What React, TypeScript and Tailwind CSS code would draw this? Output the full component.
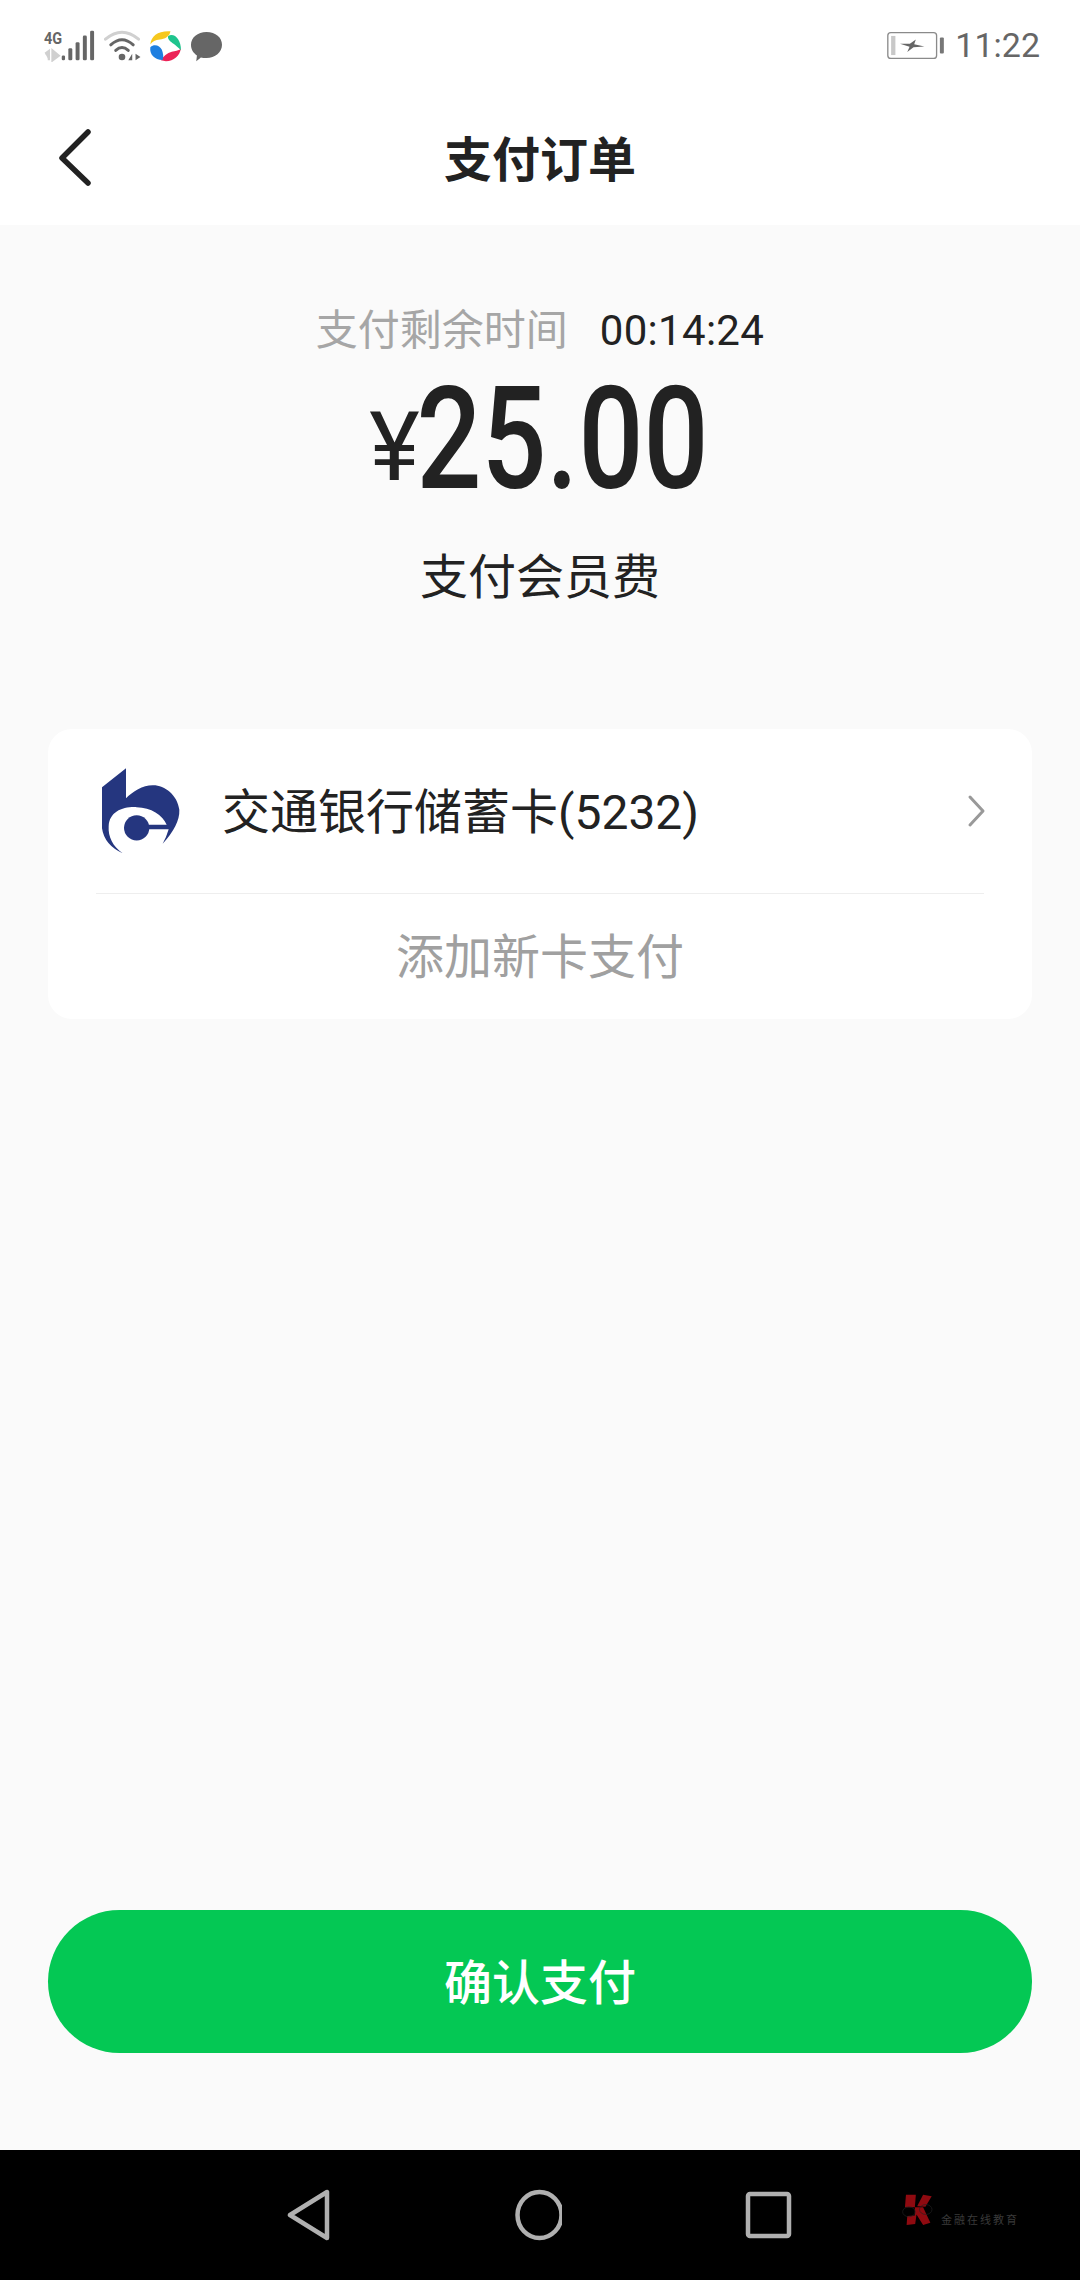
import React from "react";

const CJK = "font-['Roboto','Noto_Sans_CJK_SC',sans-serif]";

function Signal() {
  return (
    <svg width="52" height="33" viewBox="130 85 156 100" className="block">
      <text x="132" y="129" fontFamily="Roboto, sans-serif" fontWeight="700" fontSize="50" fill="#666" textLength="55" lengthAdjust="spacingAndGlyphs">4G</text>
      <path d="M136 160 L147 152 V180 M158 150 V180 L177 166 Z" stroke="#d0d0d0" strokeWidth="7" fill="#d0d0d0" />
      <rect x="186" y="165" width="10" height="15" rx="4" fill="#666" />
      <rect x="206" y="143" width="12" height="37" rx="4" fill="#666" />
      <rect x="228" y="125" width="12" height="55" rx="4" fill="#666" />
      <rect x="250" y="105" width="12" height="75" rx="4" fill="#666" />
      <rect x="272" y="90" width="12" height="90" rx="4" fill="#666" />
    </svg>
  );
}

function Wifi() {
  return (
    <svg width="38" height="33" viewBox="308 85 114 100" className="block">
      <path d="M315 116 Q365 74 415 116" fill="none" stroke="#d0d0d0" strokeWidth="9" strokeLinecap="round" />
      <path d="M331 133 Q365 102 399 133" fill="none" stroke="#666" strokeWidth="9" strokeLinecap="round" />
      <path d="M346 150 Q365 132 384 150" fill="none" stroke="#666" strokeWidth="9" strokeLinecap="round" />
      <circle cx="365" cy="170" r="10" fill="#666" />
      <path d="M396 160 V180 H384 Z M406 160 V180 L421 170 Z" fill="#666" />
    </svg>
  );
}

function Pinwheel() {
  return (
    <svg width="33" height="33" viewBox="445 85 100 100" className="block">
      <path d="M449 132 C452 106 472 90 510 92 C508 108 492 116 478 117 C464 118 455 124 449 132 Z" fill="#f6c81e" />
      <path d="M503 106 C522 96 542 116 542 150 C530 136 518 130 510 123 C505 118 501 112 503 106 Z" fill="#1fc48d" />
      <path d="M541 146 C538 168 512 190 481 180 C488 168 500 158 514 154 C524 151 534 150 541 146 Z" fill="#ec2357" />
      <path d="M449 140 C462 128 478 136 484 148 C488 160 490 170 486 179 C462 178 446 162 449 140 Z" fill="#1f7fe0" />
    </svg>
  );
}

function Bubble() {
  return (
    <svg width="33" height="33" viewBox="572 85 100 100" className="block">
      <path d="M622 94 C650 94 669 111 669 133 C669 156 648 173 622 173 C615 173 610 172 605 171 L591 183 L593 165 C582 158 575 147 575 133 C575 111 595 94 622 94 Z" fill="#666" />
    </svg>
  );
}

function Battery() {
  return (
    <svg width="59" height="29" viewBox="326 92 176 88" className="block">
      <rect x="330" y="97" width="148" height="78" rx="9" fill="none" stroke="#8a8a8a" strokeWidth="4" />
      <rect x="340" y="107" width="13" height="58" fill="#c8c8c8" />
      <path d="M367 131 L397 131 L415 118 L410 132 L441 139 L408 141 L389 156 L396 140 Z" fill="#666" />
      <rect x="488" y="112" width="12" height="48" rx="3" fill="#777" />
    </svg>
  );
}

function BankLogo() {
  return (
    <svg width="90" height="97" viewBox="200 160 270 290" className="block shrink-0">
      <path d="M290 175 L218 232 L218 355 Q225 405 280 430 C250 410 236 380 238 350 C240 305 280 290 322 292 C365 293 400 315 412 345 L355 345 L355 358 L418 358 Q410 385 400 402 Q452 345 450 300 C445 255 405 225 370 226 C340 226 310 245 290 265 Z" fill="#25367f" />
      <circle cx="322" cy="354" r="38" fill="#25367f" />
    </svg>
  );
}

export default function App() {
  return (
    <div className={`flex h-[2280px] w-[1080px] flex-col overflow-hidden bg-[#fafafa] ${CJK}`}>
      <header className="flex h-[225px] shrink-0 flex-col bg-white">
        <div className="flex h-[90px] items-center justify-between pl-[43px] pr-[40px]">
          <div className="flex items-center gap-[8px]">
            <Signal />
            <Wifi />
            <Pinwheel />
            <Bubble />
          </div>
          <div className="flex items-center gap-[10px]">
            <Battery />
            <span className="text-[34px] leading-none text-[#666666]">11:22</span>
          </div>
        </div>
        <div className="relative flex h-[135px] items-start justify-center">
          <svg width="40" height="64" viewBox="0 0 40 64" className="absolute left-[55px] top-[36px]" fill="none" stroke="#222222" strokeWidth="5.5" strokeLinecap="round" strokeLinejoin="round">
            <path d="M33 6 L7 32 L33 57" />
          </svg>
          <h1 className="pt-[38px] text-[48px] font-bold leading-[66px] text-[#222222]">支付订单</h1>
        </div>
      </header>

      <main className="flex flex-1 flex-col items-center px-[48px]">
        <div className="mt-[79px] flex h-[54px] items-center gap-[32px] text-[42px] leading-none">
          <span className="text-[#a6a6a6]">支付剩余时间</span>
          <span className="tracking-[0.3px] text-[#222222]">00:14:24</span>
        </div>
        <div className="flex h-[139px] items-end justify-center text-[#222222]">
          <span className="text-[96px] leading-[100px]">¥</span>
          <span className="mr-[6px] flex w-[285px] scale-x-[0.8] justify-center whitespace-nowrap text-[143px] font-medium leading-[115px]">25.00</span>
        </div>
        <p className="mt-[46px] text-[48px] leading-[70px] text-[#222222]">支付会员费</p>

        <section className="mt-[116px] w-full rounded-[24px] bg-white px-[48px]">
          <div className="flex h-[165px] items-center border-b border-[#eeeeee]">
            <BankLogo />
            <span className="ml-[36px] flex-1 pt-[4px] text-[48px] leading-none text-[#222222]">交通银行储蓄卡(5232)</span>
            <svg width="22" height="34" viewBox="0 0 22 34" className="mr-[-3px]" fill="none" stroke="#999999" strokeWidth="3" strokeLinecap="round" strokeLinejoin="round">
              <path d="M5 3 L18 17 L5 31" />
            </svg>
          </div>
          <div className="flex h-[125px] items-center justify-center pt-[3px] text-[48px] text-[#a0a0a0]">添加新卡支付</div>
        </section>

        <button className="mb-[97px] mt-auto flex h-[143px] w-full items-center justify-center rounded-full bg-[#04c854] pt-[4px] text-[48px] font-medium text-white">确认支付</button>
      </main>

      <footer className="relative flex h-[130px] shrink-0 items-center bg-black pl-[284px]">
        <div className="flex items-center gap-[182px]">
          <svg width="48" height="52" viewBox="0 0 48 52" fill="none" stroke="#b0b0b0" strokeWidth="4.5" strokeLinejoin="round">
            <path d="M43 3 V49 L6 26 Z" />
          </svg>
          <svg width="48" height="52" viewBox="0 0 48 52" fill="none" stroke="#b0b0b0" strokeWidth="4.5">
            <ellipse cx="25.5" cy="26" rx="22" ry="23" />
          </svg>
          <svg width="48" height="52" viewBox="0 0 48 52" fill="none" stroke="#b0b0b0" strokeWidth="4.5" strokeLinejoin="round">
            <rect x="4" y="5" width="41" height="42" rx="2" />
          </svg>
        </div>
        <div className="absolute left-[902px] top-[43px] flex items-end gap-[8px]">
          <svg width="31" height="33" viewBox="127 100 92 100" className="block">
            <path d="M138 105 H168 L165 143 H135 Z" fill="#8f0a10" />
            <path d="M190 105 L216 110 L197 142 L172 140 Z" fill="#8f0a10" />
            <path d="M165 143 L190 143 L212 190 L190 197 L170 165 L166 194 L140 197 L142 170 L165 168 Z" fill="#8f0a10" />
            <ellipse cx="147" cy="157" rx="19" ry="15" fill="none" stroke="#222" strokeWidth="2" />
            <ellipse cx="198" cy="150" rx="19" ry="15" fill="none" stroke="#222" strokeWidth="2" />
          </svg>
          <span className="text-[11px] leading-none tracking-[2px] text-[#3a3a3a]">金融在线教育</span>
        </div>
      </footer>
    </div>
  );
}
